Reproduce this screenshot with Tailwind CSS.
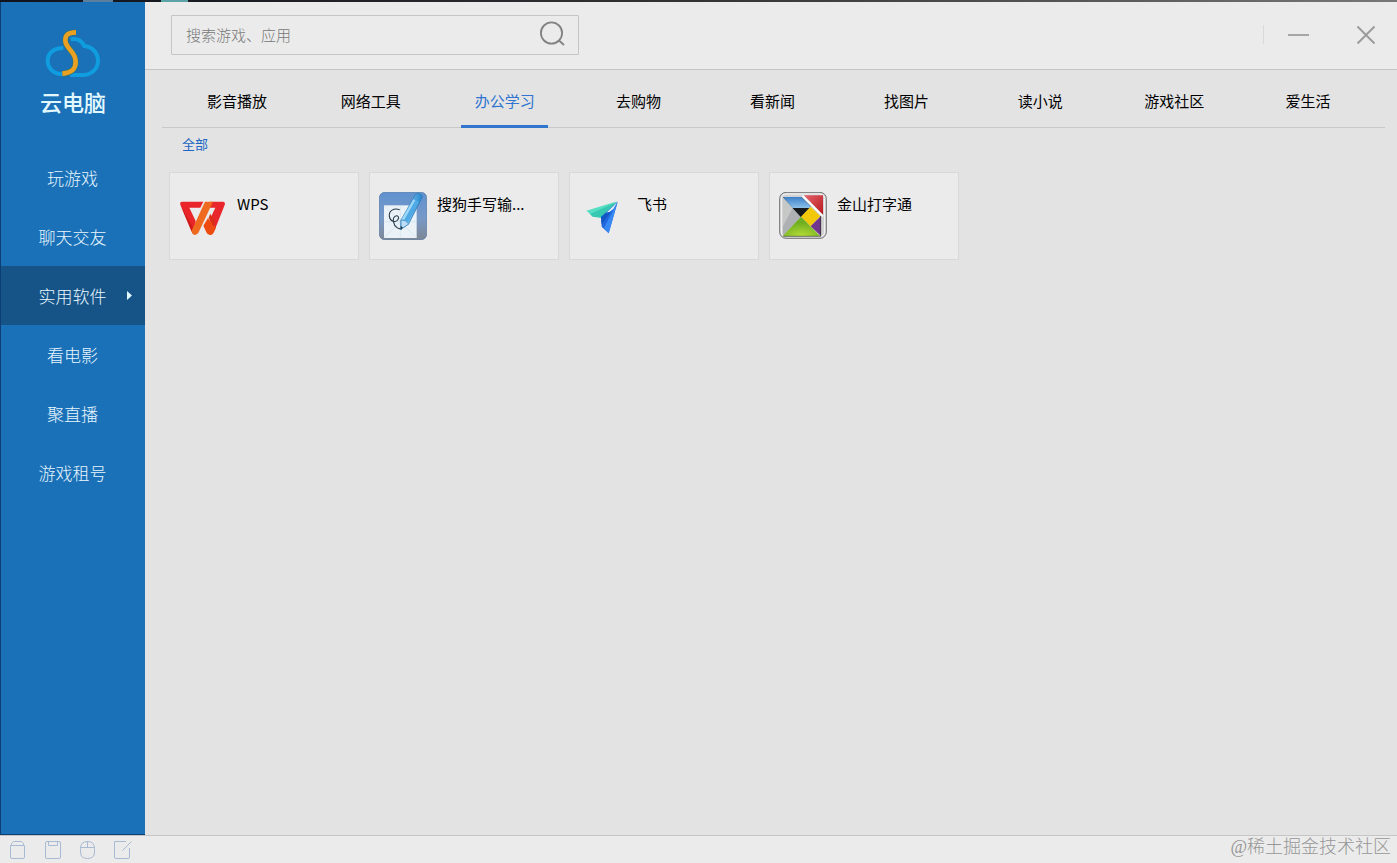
<!DOCTYPE html>
<html lang="zh-CN">
<head>
    <meta charset="UTF-8">
    <meta name="viewport" content="width=device-width, initial-scale=1.0">
    <title>云电脑</title>
    <script src="https://cdn.jsdelivr.net/npm/@tailwindcss/browser@4"></script>
</head>
<body class="h-screen flex flex-col overflow-hidden bg-[#e3e3e3] text-black font-['Noto_Sans_CJK_SC',sans-serif]">

    <!-- Window top edge -->
    <div class="h-[2px] shrink-0 flex bg-linear-to-r from-[#10121c] via-[#333333] to-[#777777]">
        <span class="ml-[83px] w-[30px] bg-[#5d7f9e]"></span>
        <span class="ml-[48px] w-[27px] bg-[#5ba3a6]"></span>
    </div>

    <div class="flex-1 min-h-0 flex">
        <!-- Sidebar -->
        <aside class="w-[145px] shrink-0 flex flex-col bg-[#1a71b7] border-l border-b border-[#0d3f74] text-[#e8f6ff]">
            <div class="h-[146px] flex flex-col items-center pt-[26px]">
                <svg class="w-[56px] h-[50px]" viewBox="135 84 168 150" fill="none">
                    <path d="M190 223C160 222 143 204 143 183C143 160 160 144 190 144M212 118C232 114 246 124 253 138C278 140 294 160 294 182C294 206 275 225 247 225H210" stroke="#0f9ddf" stroke-width="12"/>
                    <path d="M228 97C201 97 196 107 196 121C196 147 227 153 227 185C227 207 217 218 187 221" stroke="#2f7177" stroke-width="18"/>
                    <path d="M228 97C201 97 196 107 196 121C196 147 227 153 227 185C227 207 217 218 187 221" stroke="#eaa021" stroke-width="14"/>
                </svg>
                <h1 class="mt-[7px] text-[22px] leading-[32px] font-medium text-[#e2f8ff]">云电脑</h1>
            </div>
            <nav class="flex flex-col pr-px text-[17px] text-center font-light">
                <a href="#" class="h-[59px] leading-[59px]">玩游戏</a>
                <a href="#" class="h-[59px] leading-[59px]">聊天交友</a>
                <a href="#" class="relative h-[59px] -mr-px pr-px leading-[59px] bg-[#165488]">
                    实用软件
                    <svg class="absolute right-[13px] top-[25px] w-[5px] h-[9px]" viewBox="0 0 5 9" fill="#e2f8ff"><path d="M0 0L5 4.5L0 9Z"/></svg>
                </a>
                <a href="#" class="h-[59px] leading-[59px]">看电影</a>
                <a href="#" class="h-[59px] leading-[59px]">聚直播</a>
                <a href="#" class="h-[59px] leading-[59px]">游戏租号</a>
            </nav>
        </aside>

        <div class="flex-1 min-w-0 flex flex-col">
            <!-- Search and window controls -->
            <header class="h-[68px] shrink-0 flex items-center justify-between bg-[#ebebeb] border-b border-[#c4c4c4] pl-[26px] pr-[21px] pb-[2px]">
                <form class="w-[408px] h-[40px] flex items-center border border-[#c3c6c3] rounded-[1px]">
                    <input type="text" aria-label="搜索游戏、应用" placeholder="搜索游戏、应用" class="flex-1 min-w-0 h-full pl-[14px] text-[15px] font-light outline-none placeholder:text-[#777777]">
                    <button type="button" aria-label="搜索" class="w-[28px] h-[28px] mr-[12px] mb-[4px]">
                        <svg class="w-[28px] h-[28px]" viewBox="0 0 28 28" fill="none" stroke="#828282" stroke-width="1.8"><circle cx="13.5" cy="14" r="10.6"/><path d="M21 21.5L26 26"/></svg>
                    </button>
                </form>
                <div class="flex items-center">
                    <span class="w-px h-[19px] bg-[#dadada]"></span>
                    <button type="button" aria-label="最小化" class="ml-[24px]">
                        <svg class="w-[21px] h-[20px]" viewBox="0 0 21 20"><path d="M0 10H21" stroke="#a6a6a6" stroke-width="2"/></svg>
                    </button>
                    <button type="button" aria-label="关闭" class="ml-[47px]">
                        <svg class="w-[20px] h-[20px]" viewBox="0 0 20 20"><path d="M1.5 1.5L18.5 18.5M18.5 1.5L1.5 18.5" stroke="#9c9c9c" stroke-width="2"/></svg>
                    </button>
                </div>
            </header>

            <!-- Category tabs -->
            <nav class="h-[58px] shrink-0 ml-[17px] mr-[12px] pl-[8px] pr-[10px] flex border-b border-[#c8c8c8] text-[15px] leading-[62px] text-center">
                <a href="#" class="flex-1">影音播放</a>
                <a href="#" class="flex-1">网络工具</a>
                <a href="#" class="flex-1 flex justify-center text-[#2e74d0]"><span class="w-[87px] h-[58px] border-b-3 border-[#2f76cc]">办公学习</span></a>
                <a href="#" class="flex-1">去购物</a>
                <a href="#" class="flex-1">看新闻</a>
                <a href="#" class="flex-1">找图片</a>
                <a href="#" class="flex-1">读小说</a>
                <a href="#" class="flex-1">游戏社区</a>
                <a href="#" class="flex-1">爱生活</a>
            </nav>

            <main class="pl-[24px] pr-[12px]">
                <a href="#" class="block w-fit ml-[13px] mt-[6px] text-[13px] leading-[20px] text-[#2066c4]">全部</a>
                <div class="mt-[18px] flex flex-wrap gap-[10px] text-[15px] leading-[24px]">
                    <a href="#" class="w-[190px] h-[88px] flex gap-[10px] pl-[9px] pt-[19px] bg-[#ebebeb] border border-[#d9d9d9]">
                        <svg class="w-[48px] h-[48px] shrink-0" viewBox="57 81 144 144">
                            <path d="M66 110H130L121 128H88L107 168L101 205Q95 199 92 193L61 119Q59 110 66 110Z" fill="#e9252a"/>
                            <path d="M64 126L101 190L99 207Q94 199 92 193Z" fill="#cf1c1d"/>
                            <path d="M151 110H190Q197 112 194 120L165 193L149 164L166 128H147Z" fill="#e8262b"/>
                            <path d="M135 110H159L116 202Q109 214 99 208L94 199Z" fill="#ef691f"/>
                            <path d="M144 159L168 188L161 203Q156 212 148 209Q142 209 139 202L130 182Z" fill="#ee4b11"/>
                            <path d="M146 158L151 146L166 173L161 185Z" fill="#d92f17"/>
                        </svg>
                        <span class="flex-1 min-w-0 truncate">WPS</span>
                    </a>
                    <a href="#" class="w-[190px] h-[88px] flex gap-[10px] pl-[9px] pr-[30px] pt-[19px] bg-[#ebebeb] border border-[#d9d9d9]">
                        <svg class="w-[48px] h-[48px] shrink-0" viewBox="42 81 144 144">
                            <defs>
                                <linearGradient id="pad" x1="0" y1="0" x2="0" y2="1"><stop offset="0" stop-color="#5f91cf"/><stop offset=".55" stop-color="#7899c7"/><stop offset="1" stop-color="#7e8794"/></linearGradient>
                                <linearGradient id="pen" x1="0" y1="0" x2="1" y2="0"><stop offset="0" stop-color="#a5dcfa"/><stop offset="1" stop-color="#2687ce"/></linearGradient>
                            </defs>
                            <rect x="43" y="82" width="142" height="142" rx="16" fill="url(#pad)" stroke="#5076a4" stroke-width="2"/>
                            <rect x="57" y="121" width="98" height="98" fill="#eaf1f7"/>
                            <path d="M57 170H155M106 121V219M57 219L155 121M57 121L155 219" stroke="#c5dce9" stroke-width="1.5"/>
                            <path d="M104 134C87 128 71 137 73 154C75 169 91 174 98 165C105 157 98 149 90 154C81 160 85 181 96 188C102 192 107 192 110 191" fill="none" stroke="#253746" stroke-width="3.2"/>
                            <path d="M151 89Q156 82 165 87Q174 91 171 98L131 177L107 193L108 165Z" fill="url(#pen)" stroke="#2876b4" stroke-width="2"/>
                            <path d="M108 165Q122 163 131 177L108 193Z" fill="#b9def5" stroke="#2876b4" stroke-width="2"/>
                            <path d="M145 102L162 111L129 171L110 163Z" fill="#4fa9e4"/>
                            <path d="M145 103L151 106L118 164L110 163Z" fill="#9bd7f8"/>
                            <path d="M107 182L114 188L107 194Z" fill="#213948"/>
                        </svg>
                        <span class="flex-1 min-w-0 truncate">搜狗手写输...</span>
                    </a>
                    <a href="#" class="w-[190px] h-[88px] flex gap-[10px] pl-[9px] pt-[19px] bg-[#ebebeb] border border-[#d9d9d9]">
                        <svg class="w-[48px] h-[48px] shrink-0" viewBox="42 81 144 144">
                            <path d="M64 137L157 109L85 155Z" fill="#56dec2"/>
                            <path d="M75 147L157 110L124 143L111 159L83 155Z" fill="#36c8b1"/>
                            <path d="M108 156L158 110L131 205L110 185Z" fill="#1f67dc"/>
                            <path d="M158 110L117 188L131 205Z" fill="#3688f4"/>
                            <path d="M124 143L156 113L145 132L132 142Z" fill="#e3f5fb"/>
                            <path d="M108 156L124 143L137 141L110 178Z" fill="#1355c3"/>
                        </svg>
                        <span class="flex-1 min-w-0 truncate">飞书</span>
                    </a>
                    <a href="#" class="w-[190px] h-[88px] flex gap-[10px] pl-[9px] pt-[19px] bg-[#ebebeb] border border-[#d9d9d9]">
                        <svg class="w-[48px] h-[48px] shrink-0" viewBox="42 81 144 144">
                            <defs>
                                <linearGradient id="blue" x1="0" y1="0" x2="0" y2="1"><stop offset="0" stop-color="#3d7fc8"/><stop offset="1" stop-color="#8bc1e9"/></linearGradient>
                                <radialGradient id="green" cx=".5" cy="1" r=".7"><stop offset="0" stop-color="#b5dc38"/><stop offset="1" stop-color="#6fae20"/></radialGradient>
                                <linearGradient id="red" x1="0" y1="0" x2="1" y2="1"><stop offset="0" stop-color="#e4646b"/><stop offset="1" stop-color="#b8161d"/></linearGradient>
                            </defs>
                            <rect x="44" y="82" width="140" height="138" rx="19" fill="#d2d2d2" stroke="#747474" stroke-width="3"/>
                            <rect x="49" y="87" width="130" height="128" rx="14" fill="none" stroke="#f6f6f6" stroke-width="3"/>
                            <path d="M54 97L108 155L54 212Z" fill="#aeb1b3"/>
                            <path d="M54 97L83 129L54 184Z" fill="#c6c8c8"/>
                            <path d="M54 96H109L137 124L108 156Z" fill="#171b1c"/>
                            <path d="M54 96H109L137 124L134 129H83Z" fill="url(#blue)"/>
                            <path d="M117 91H174V149Z" fill="url(#red)"/>
                            <path d="M83 129H133L108 156Z" fill="#171b1c"/>
                            <path d="M108 155L137 125L166 154L137 184Z" fill="#f2c80b"/>
                            <path d="M137 184L168 153V213Z" fill="#70358d"/>
                            <path d="M108 155L165 213H53Z" fill="url(#green)"/>
                            <path d="M112 92L174 154" stroke="#ffffff" stroke-width="5"/>
                            <path d="M167 153V214H55" fill="none" stroke="#243018" stroke-width="2"/>
                        </svg>
                        <span class="flex-1 min-w-0 truncate">金山打字通</span>
                    </a>
                </div>
            </main>
        </div>
    </div>

    <!-- Bottom toolbar -->
    <footer class="h-[28px] shrink-0 flex items-center justify-between bg-[#ebebeb] border-t border-[#c6c6c6] pl-[9px] pr-[6px]">
        <div class="flex gap-[17px] text-[#a9bad4]">
            <button type="button" aria-label="软件包">
                <svg class="w-[18px] h-[20px]" viewBox="0 0 18 20" fill="none" stroke="currentColor"><path d="M1.5 5.5H15.5V17Q15.5 18.5 14 18.5H3Q1.5 18.5 1.5 17ZM2.5 5V3.5L4.5 1.5H12.5L14.5 3.5V5"/></svg>
            </button>
            <button type="button" aria-label="保存">
                <svg class="w-[18px] h-[20px]" viewBox="0 0 18 20" fill="none" stroke="currentColor"><path d="M3 1.5H15Q16.5 1.5 16.5 3V17Q16.5 18.5 15 18.5H3Q1.5 18.5 1.5 17V3Q1.5 1.5 3 1.5ZM4.5 2V5.5H13.5V2"/></svg>
            </button>
            <button type="button" aria-label="鼠标">
                <svg class="w-[18px] h-[20px]" viewBox="0 0 18 20" fill="none" stroke="currentColor"><path d="M1.5 8.5Q1.5 1.5 8.5 1.5Q15.5 1.5 15.5 8.5V12Q15.5 18.5 8.5 18.5Q1.5 18.5 1.5 12ZM1.5 7.5H15.5M8.5 1.5V7.5"/></svg>
            </button>
            <button type="button" aria-label="反馈">
                <svg class="w-[20px] h-[20px]" viewBox="1 0 20 20" fill="none" stroke="currentColor"><path d="M13 1.5H1.5V17Q1.5 18.5 3 18.5H15Q16.5 18.5 16.5 17V8M9.5 10.5L18.5 1.5"/></svg>
            </button>
        </div>
        <p class="mb-[6px] text-[18px] leading-[24px] text-[#969696] font-light font-['Liberation_Serif','Noto_Sans_CJK_SC',serif]">@稀土掘金技术社区</p>
    </footer>
</body>
</html>
